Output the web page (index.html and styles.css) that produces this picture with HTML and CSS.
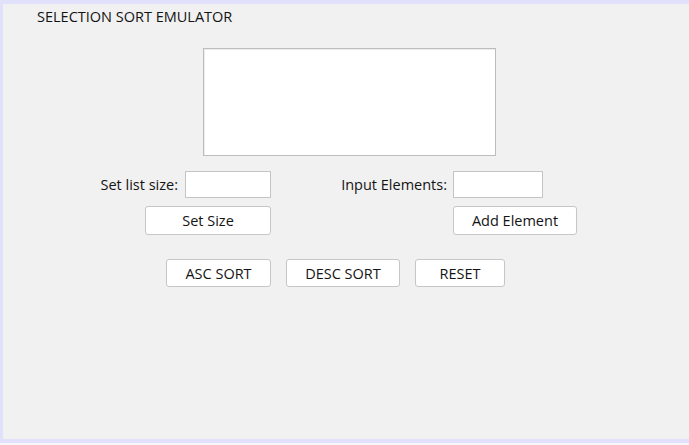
FILE: index.html
```html
<!DOCTYPE html>
<html>
<head>
<meta charset="utf-8">
<title>Selection Sort Emulator</title>
<link rel="stylesheet" href="styles.css">
</head>
<body>
<div class="window">
  <div class="title">SELECTION SORT EMULATOR</div>
  <div class="output"></div>
  <div class="row fields">
    <label class="label label-size">Set list size:</label>
    <div class="input input-size"></div>
    <label class="label label-elem">Input Elements:</label>
    <div class="input input-elem"></div>
  </div>
  <div class="row actions">
    <button class="btn btn-size">Set Size</button>
    <button class="btn btn-add">Add Element</button>
  </div>
  <div class="row sorts">
    <button class="btn btn-asc">ASC SORT</button>
    <button class="btn btn-desc">DESC SORT</button>
    <button class="btn btn-reset">RESET</button>
  </div>
</div>
</body>
</html>
```
FILE: styles.css
```css
html, body {
  margin: 0;
  padding: 0;
  background: #f7f7fb;
}
body {
  width: 689px;
  height: 445px;
  overflow: hidden;
  font-family: "Open Sans", "Noto Sans", sans-serif;
  color: #141414;
}
.window {
  box-sizing: border-box;
  width: 689px;
  height: 443px;
  background: #f1f1f1;
  border-top: 4px solid #e1e1fb;
  border-left: 3px solid #e1e1fb;
  border-bottom: 4px solid #e1e1fb;
  display: flex;
  flex-direction: column;
}
.title {
  font-size: 14.5px;
  line-height: 20px;
  padding: 3px 0 0 34px;
  height: 44px;
  box-sizing: border-box;
}
.output {
  margin-left: 200px;
  width: 293px;
  height: 108px;
  box-sizing: border-box;
  background: #fff;
  border: 1px solid #bdbdbd;
  box-shadow: inset 1px 1px 0 #ececec;
}
.row {
  display: flex;
  align-items: center;
}
.fields {
  margin-top: 15px;
  height: 27px;
  font-size: 14.5px;
}
.label {
  text-align: right;
  white-space: nowrap;
}
.label-size {
  margin-left: 74px;
  width: 101px;
}
.input {
  box-sizing: border-box;
  height: 27px;
  background: #fff;
  border: 1px solid #c4c4c4;
}
.input-size {
  margin-left: 7px;
  width: 86px;
}
.label-elem {
  margin-left: 20px;
  width: 156px;
}
.input-elem {
  margin-left: 6px;
  width: 90px;
}
.btn {
  box-sizing: border-box;
  font-family: inherit;
  font-size: 14.5px;
  color: #141414;
  background: #fff;
  border: 1px solid #c6c6c6;
  border-radius: 3px;
  padding: 0;
  margin: 0;
}
.actions {
  margin-top: 8px;
}
.actions .btn {
  height: 29px;
}
.btn-size {
  margin-left: 142px;
  width: 126px;
}
.btn-add {
  margin-left: 182px;
  width: 124px;
}
.sorts {
  margin-top: 24px;
  gap: 15px;
  padding-left: 163px;
}
.sorts .btn {
  height: 28px;
}
.btn-asc { width: 105px; }
.btn-desc { width: 114px; }
.btn-reset { width: 90px; }
```
